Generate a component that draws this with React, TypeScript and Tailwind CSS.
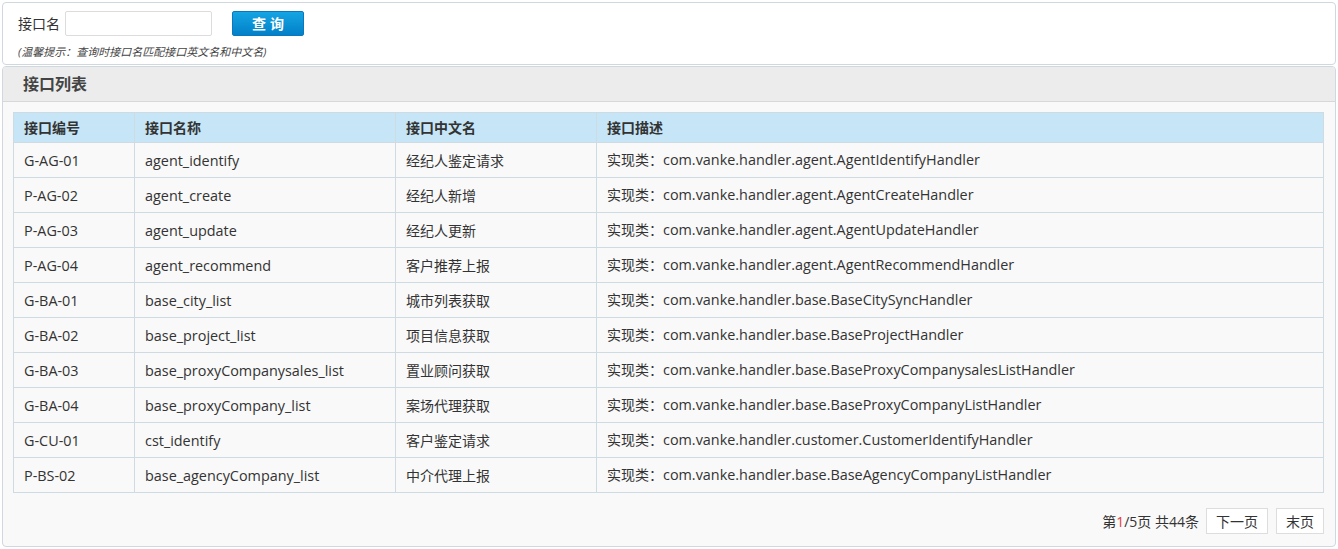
const rows = [
  ["G-AG-01", "agent_identify", "经纪人鉴定请求", "com.vanke.handler.agent.AgentIdentifyHandler"],
  ["P-AG-02", "agent_create", "经纪人新增", "com.vanke.handler.agent.AgentCreateHandler"],
  ["P-AG-03", "agent_update", "经纪人更新", "com.vanke.handler.agent.AgentUpdateHandler"],
  ["P-AG-04", "agent_recommend", "客户推荐上报", "com.vanke.handler.agent.AgentRecommendHandler"],
  ["G-BA-01", "base_city_list", "城市列表获取", "com.vanke.handler.base.BaseCitySyncHandler"],
  ["G-BA-02", "base_project_list", "项目信息获取", "com.vanke.handler.base.BaseProjectHandler"],
  ["G-BA-03", "base_proxyCompanysales_list", "置业顾问获取", "com.vanke.handler.base.BaseProxyCompanysalesListHandler"],
  ["G-BA-04", "base_proxyCompany_list", "案场代理获取", "com.vanke.handler.base.BaseProxyCompanyListHandler"],
  ["G-CU-01", "cst_identify", "客户鉴定请求", "com.vanke.handler.customer.CustomerIdentifyHandler"],
  ["P-BS-02", "base_agencyCompany_list", "中介代理上报", "com.vanke.handler.base.BaseAgencyCompanyListHandler"],
]

export default function App() {
  return (
    <div className="w-[1338px] h-[549px] bg-white px-[2px] pt-[2px] text-[14px] text-[#333] font-['Open_Sans','Noto_Sans_CJK_SC',sans-serif]">
      {/* search panel */}
      <div className="h-[63px] border border-[#cfd8de] rounded-[4px] bg-white px-[15px] pt-[8px]">
        <div className="flex items-center h-[25px]">
          <span className="text-[14px] text-[#333] mr-[5px]">接口名</span>
          <input className="w-[147px] h-[25px] border border-[#dcdcdc] rounded-[2px] bg-white outline-none" />
          <button className="ml-[20px] w-[72px] h-[25px] rounded-[2px] border border-[#0a78c0] bg-gradient-to-b from-[#14a5e3] to-[#0480c8] text-white text-[14px] font-bold tracking-[4px] pl-[4px]">
            查询
          </button>
        </div>
        <p className="mt-[9px] text-[11px] italic text-[#444] leading-[13px]">(温馨提示：查询时接口名匹配接口英文名和中文名)</p>
      </div>

      {/* list panel */}
      <div className="mt-[1px] h-[481px] border border-[#cfd8de] rounded-[4px] bg-[#f9f9f9] overflow-hidden">
        <div className="h-[35px] bg-[#ececec] border-b border-[#d5d9db] flex items-center px-[20px]">
          <h2 className="text-[16px] font-bold text-[#444]">接口列表</h2>
        </div>
        <div className="px-[10px] pt-[10px]">
          <table className="w-[1311px] border-collapse table-fixed">
            <colgroup>
              <col className="w-[121px]" />
              <col className="w-[261px]" />
              <col className="w-[201px]" />
              <col />
            </colgroup>
            <thead>
              <tr className="h-[30px] bg-[#c6e6f7]">
                {["接口编号", "接口名称", "接口中文名", "接口描述"].map((h) => (
                  <th key={h} className="border border-[#cfdbe2] px-[10px] text-left text-[14px] font-bold text-[#333]">
                    {h}
                  </th>
                ))}
              </tr>
            </thead>
            <tbody>
              {rows.map((r) => (
                <tr key={r[0]} className="h-[35px] text-[14.4px]">
                  <td className="border border-[#cfdbe2] px-[10px] pt-[2px]">{r[0]}</td>
                  <td className="border border-[#cfdbe2] px-[10px] pt-[2px]">{r[1]}</td>
                  <td className="border border-[#cfdbe2] px-[10px] text-[14px]">{r[2]}</td>
                  <td className="border border-[#cfdbe2] px-[10px]">
                    <span className="text-[14px]">实现类：</span>
                    {r[3]}
                  </td>
                </tr>
              ))}
            </tbody>
          </table>
          <div className="flex justify-end items-center mt-[15px] mr-[1px] text-[14px] text-[#333]">
            <span className="mr-[7px]">
              第<span className="text-[#e4393c]">1</span>/5页 共44条
            </span>
            <button className="h-[26px] px-[9px] border border-[#dddddd] bg-white text-[#333] mr-[8px]">下一页</button>
            <button className="h-[26px] px-[9px] border border-[#dddddd] bg-white text-[#333]">末页</button>
          </div>
        </div>
      </div>
    </div>
  )
}
